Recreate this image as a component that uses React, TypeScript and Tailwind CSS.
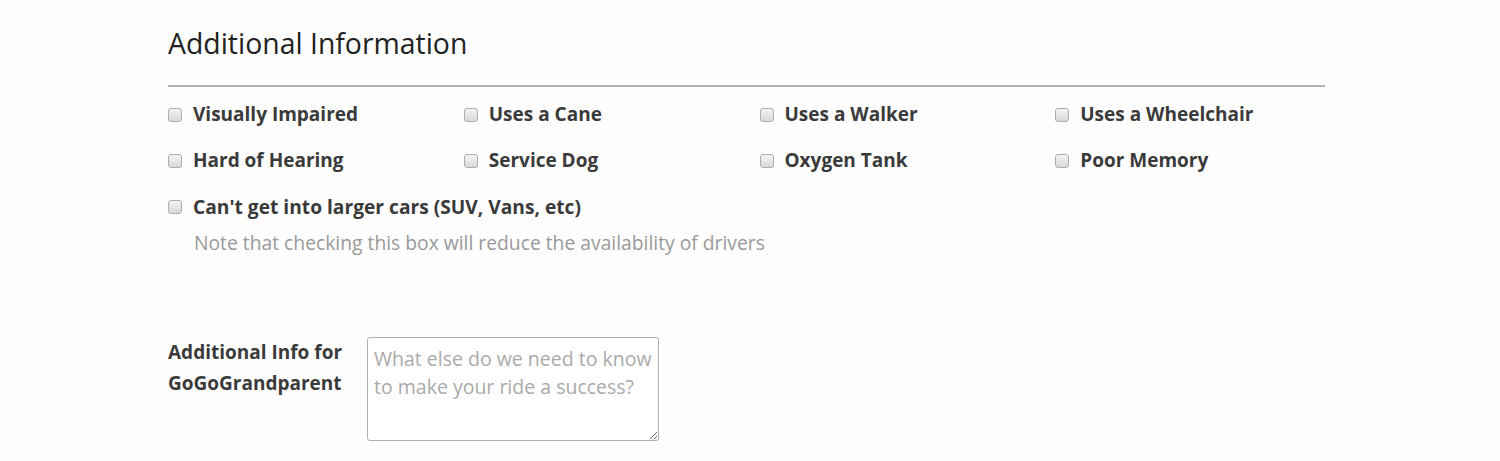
import React from 'react';

const options = [
  'Visually Impaired',
  'Uses a Cane',
  'Uses a Walker',
  'Uses a Wheelchair',
  'Hard of Hearing',
  'Service Dog',
  'Oxygen Tank',
  'Poor Memory',
];

const Box = () => (
  <input
    type="checkbox"
    className="appearance-none w-[14px] h-[14px] shrink-0 rounded-[3px] border border-[#adadad] bg-gradient-to-b from-[#f4f4f4] to-[#d8d8d8] m-0"
  />
);

export default function App() {
  return (
    <div
      className="min-h-[461px] bg-[#fefefe] text-[#333]"
      style={{ fontFamily: '"Open Sans", "Liberation Sans", sans-serif' }}
    >
      <div className="w-[1157px] ml-[168px] pt-[26px]">
        <h2 className="text-[28.4px] leading-[34px] font-normal text-[#222]">Additional Information</h2>
        <hr className="mt-[25px] border-0 border-t-2 border-[#b3b3b3]" />

        <div className="grid grid-cols-4 w-[1183px] -mx-[15px] mt-[15px] gap-y-[21px]">
          {options.map((o) => (
            <label key={o} className="flex items-center gap-[11px] px-[15px] h-[25px]">
              <Box />
              <span className="text-[19px] font-bold leading-[25px] text-[#3a3a3a]">{o}</span>
            </label>
          ))}
        </div>

        <label className="flex items-center gap-[11px] h-[25px] mt-[21px]">
          <Box />
          <span className="text-[19.2px] font-bold leading-[25px] text-[#3a3a3a]">
            Can't get into larger cars (SUV, Vans, etc)
          </span>
        </label>
        <p className="ml-[26px] mt-[11px] text-[19.3px] leading-[25px] text-[#999]">
          Note that checking this box will reduce the availability of drivers
        </p>

        <div className="flex mt-[82px]">
          <div className="w-[199px] text-[19px] font-bold leading-[31px] text-[#3a3a3a]">
            Additional Info for
            <br />
            GoGoGrandparent
          </div>
          <textarea
            placeholder="What else do we need to know to make your ride a success?"
            className="w-[292px] h-[104px] rounded-[3px] border border-[#b0b0b0] bg-white px-[6px] py-[7px] text-[19.5px] leading-[28px] text-[#555] placeholder:text-[#aaa] outline-none"
          />
        </div>
      </div>
    </div>
  );
}
